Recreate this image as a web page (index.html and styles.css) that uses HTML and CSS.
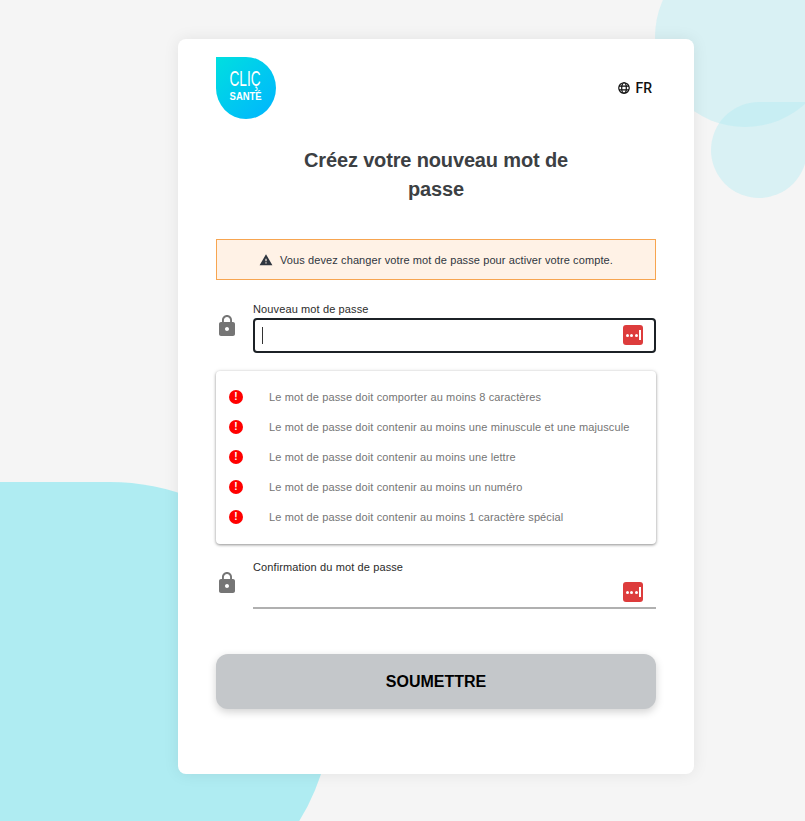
FILE: index.html
```html
<!DOCTYPE html>
<html lang="fr">
<head>
  <meta charset="UTF-8" />
  <meta name="viewport" content="width=device-width, initial-scale=1.0"/>
  <title>Clic Santé</title>
  <link rel="stylesheet" href="styles.css">
</head>
<body>

<div class="backdrop">
  <div class="blob blob-left"></div>
  <div class="blob blob-top"></div>
  <div class="blob blob-drop"></div>
</div>

<main class="card">
  <header class="card-head">
    <div class="logo">
      <span class="logo-clic">CLIÇ</span>
      <span class="logo-sante">SANTÉ</span>
    </div>
    <div class="lang">
      <svg class="globe" viewBox="0 0 24 24" width="12" height="12" fill="none" stroke="#111" stroke-width="2.4">
        <circle cx="12" cy="12" r="10.5"/>
        <ellipse cx="12" cy="12" rx="4.6" ry="10.5"/>
        <path d="M2 8.2h20M2 15.8h20"/>
      </svg>
      <span>FR</span>
    </div>
  </header>

  <h1>Créez votre nouveau mot de passe</h1>

  <div class="alert">
    <svg viewBox="0 0 24 24" width="14" height="14" fill="#2f3640"><path d="M1 21h22L12 2 1 21zm12-3h-2v-2h2v2zm0-4h-2v-4h2v4z"/></svg>
    <span>Vous devez changer votre mot de passe pour activer votre compte.</span>
  </div>

  <div class="field field-new">
    <svg class="lock" viewBox="0 0 24 24" width="24" height="24" fill="#757575"><path d="M18 8h-1V6c0-2.76-2.24-5-5-5S7 3.24 7 6v2H6c-1.1 0-2 .9-2 2v10c0 1.1.9 2 2 2h12c1.1 0 2-.9 2-2V10c0-1.1-.9-2-2-2zm-6 9c-1.1 0-2-.9-2-2s.9-2 2-2 2 .9 2 2-.9 2-2 2zm3.1-9H8.9V6c0-1.71 1.39-3.1 3.1-3.1s3.1 1.39 3.1 3.1v2z"/></svg>
    <div class="field-body">
      <label class="field-label">Nouveau mot de passe</label>
      <div class="input-box focused">
        <span class="caret"></span>
        <input type="password" class="input">
        <span class="key"><i></i><i></i><i></i><b></b></span>
      </div>
    </div>
  </div>

  <ul class="rules">
    <li><span class="bad">!</span>Le mot de passe doit comporter au moins 8 caractères</li>
    <li><span class="bad">!</span>Le mot de passe doit contenir au moins une minuscule et une majuscule</li>
    <li><span class="bad">!</span>Le mot de passe doit contenir au moins une lettre</li>
    <li><span class="bad">!</span>Le mot de passe doit contenir au moins un numéro</li>
    <li><span class="bad">!</span>Le mot de passe doit contenir au moins 1 caractère spécial</li>
  </ul>

  <div class="field field-confirm">
    <svg class="lock" viewBox="0 0 24 24" width="24" height="24" fill="#757575"><path d="M18 8h-1V6c0-2.76-2.24-5-5-5S7 3.24 7 6v2H6c-1.1 0-2 .9-2 2v10c0 1.1.9 2 2 2h12c1.1 0 2-.9 2-2V10c0-1.1-.9-2-2-2zm-6 9c-1.1 0-2-.9-2-2s.9-2 2-2 2 .9 2 2-.9 2-2 2zm3.1-9H8.9V6c0-1.71 1.39-3.1 3.1-3.1s3.1 1.39 3.1 3.1v2z"/></svg>
    <div class="field-body">
      <label class="field-label">Confirmation du mot de passe</label>
      <div class="input-box underlined">
        <input type="password" class="input">
        <span class="key"><i></i><i></i><i></i><b></b></span>
      </div>
    </div>
  </div>

  <button class="submit">SOUMETTRE</button>
</main>

</body>
</html>
```

FILE: styles.css
```css
html, body {
  height: 100%;
}
body {
  font-family: "Liberation Sans", Arial, sans-serif;
  background: #f5f5f5;
  margin: 0;
  overflow: hidden;
  position: relative;
  padding-top: 39px;
  box-sizing: border-box;
}

/* background shapes */
.backdrop {
  position: absolute;
  top: 0;
  left: 0;
  right: 0;
  bottom: 0;
  overflow: hidden;
}
.blob {
  position: absolute;
  background: #afecf2;
}
.blob-left {
  left: -200px;
  top: 482px;
  width: 532px;
  height: 445px;
  border-radius: 0 222px 222px 0;
}
.blob-top {
  left: 655px;
  top: -53px;
  width: 180px;
  height: 180px;
  border-radius: 50%;
  opacity: 0.4;
}
.blob-drop {
  left: 711px;
  top: 102px;
  width: 96px;
  height: 96px;
  border-radius: 48px 0 48px 48px;
  opacity: 0.4;
}

.card {
  position: relative;
  width: 516px;
  height: 735px;
  margin-left: 178px;
  padding: 18px 38px 0;
  box-sizing: border-box;
  background: #fff;
  border-radius: 8px;
  box-shadow: 0 0 16px rgba(0,0,0,0.08);
}
.card-head {
  display: flex;
  justify-content: space-between;
  align-items: center;
  padding-right: 4px;
}
.logo {
  width: 60px;
  height: 62px;
  border-radius: 0 50% 50% 50%;
  background: linear-gradient(135deg, #00dfe0, #00b4ff);
  color: #fff;
  display: flex;
  flex-direction: column;
  align-items: center;
  padding-top: 13px;
  box-sizing: border-box;
}
.logo-clic {
  margin-right: 2px;
  font-size: 22px;
  line-height: 18px;
  transform: scaleX(0.62);
}
.logo-sante {
  margin-top: 3px;
  font-size: 11px;
  line-height: 11px;
  font-weight: bold;
  transform: scaleX(0.86);
}
.lang {
  display: flex;
  align-items: center;
  gap: 5px;
  font-family: Roboto, sans-serif;
  font-size: 14px;
  font-weight: 500;
  color: #111;
}

h1 {
  width: 300px;
  margin: 27px auto 0;
  text-align: center;
  font-size: 20px;
  line-height: 29px;
  font-weight: bold;
  letter-spacing: -0.15px;
  color: #3c4043;
}

.alert {
  display: flex;
  justify-content: center;
  align-items: center;
  gap: 7px;
  height: 41px;
  margin-top: 35px;
  box-sizing: border-box;
  background: #fff2e6;
  border: 1px solid #f7a550;
  font-size: 11px;
  letter-spacing: 0.1px;
  color: #2f3640;
}

.field {
  display: flex;
  align-items: center;
  gap: 14px;
  margin-left: -1px;
}
.field-new {
  margin-top: 23px;
}
.field-confirm {
  margin-top: 17px;
}
.lock {
  margin-bottom: 4px;
}
.field-body {
  flex: 1;
}
.field-label {
  display: block;
  font-size: 11px;
  line-height: 13px;
  letter-spacing: 0.12px;
  color: #2b2b2b;
}
.input-box {
  display: flex;
  align-items: center;
  box-sizing: border-box;
  height: 35px;
  margin-top: 2px;
  padding: 0 11px 0 7px;
}
.input-box.focused {
  border: 2px solid #1c2126;
  border-radius: 4px;
}
.input-box.focused .key {
  margin-top: -1px;
}
.input-box.underlined {
  height: 32px;
  margin-top: 3px;
  border-bottom: 2px solid #b0b0b0;
  padding: 0 13px 0 0;
}
.caret {
  width: 1px;
  height: 17px;
  background: #333;
}
.input {
  flex: 1;
  min-width: 0;
  border: none;
  outline: none;
  background: transparent;
  padding: 0;
}
.key {
  display: flex;
  align-items: center;
  justify-content: center;
  gap: 1.5px;
  width: 20px;
  height: 20px;
  border-radius: 3px;
  background: #dd3c3c;
}
.key i {
  width: 3px;
  height: 3px;
  border-radius: 50%;
  background: #fff;
}
.key b {
  width: 1.5px;
  height: 10px;
  background: #fff;
}

.rules {
  list-style: none;
  margin: 18px 0 0;
  padding: 11px 0 13px 13px;
  height: 173px;
  box-sizing: border-box;
  background: #fff;
  border-radius: 4px;
  box-shadow: 0 1px 3px rgba(0,0,0,0.4), 0 0 5px rgba(0,0,0,0.08);
}
.rules li {
  display: flex;
  align-items: center;
  height: 30px;
  font-size: 11px;
  letter-spacing: 0.12px;
  color: #757575;
}
.bad {
  flex: none;
  width: 14px;
  height: 14px;
  margin-right: 26px;
  border-radius: 50%;
  background: #f00;
  color: #fff;
  font-size: 10px;
  font-weight: bold;
  line-height: 14px;
  text-align: center;
}

.submit {
  display: block;
  width: 100%;
  height: 55px;
  margin-top: 45px;
  border: none;
  border-radius: 12px;
  background: #c4c7ca;
  font-family: "Liberation Sans", Arial, sans-serif;
  font-size: 16px;
  font-weight: bold;
  color: #000;
  box-shadow: 0 3px 8px rgba(0,0,0,0.18);
  cursor: pointer;
}
```
